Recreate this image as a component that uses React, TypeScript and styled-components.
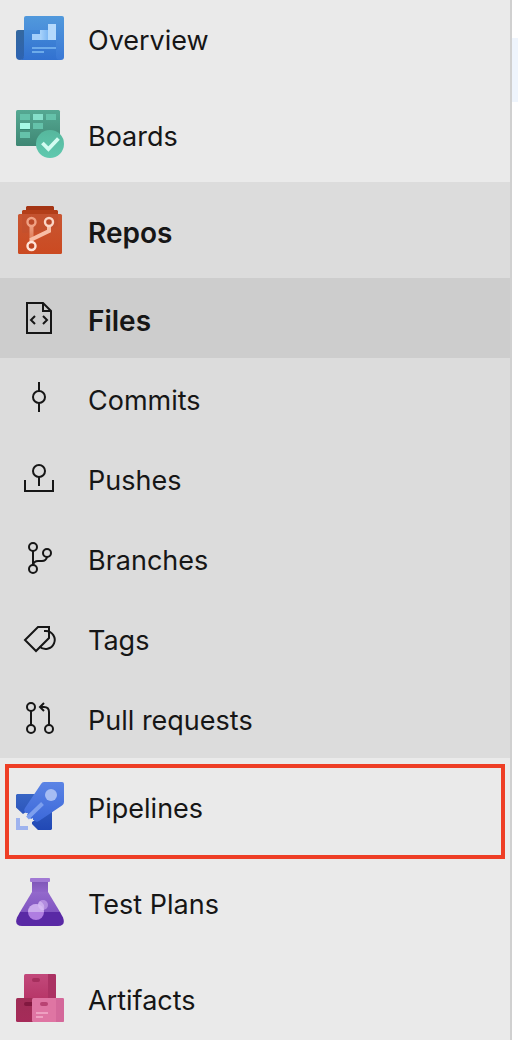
import React from "react";
import styled, { createGlobalStyle, css } from "styled-components";

const GlobalStyle = createGlobalStyle`
  * { box-sizing: border-box; }
  body { margin: 0; background: #ffffff; }
`;

const Page = styled.div`
  display: grid;
  grid-template-columns: minmax(0, 1fr) 6px;
  min-height: 100vh;
  font-family: Inter, "Liberation Sans", sans-serif;
  color: #161616;
`;

const Sidebar = styled.nav`
  background: #eaeaea;
  border-right: 2px solid #d0d0d0;
`;

const Content = styled.main`
  padding-top: 38px;
`;

const SelectedStrip = styled.div`
  height: 64px;
  background: #eff5fd;
`;

const List = styled.ul`
  margin: 0;
  padding: 0;
  list-style: none;
`;

const Group = styled.li<{ $open?: boolean }>`
  position: relative;
  background: ${(p) => (p.$open ? "#dcdcdc" : "transparent")};
`;

const NavLink = styled.a<{ $size?: "hub" | "sub"; $bold?: boolean; $current?: boolean; $edge?: "top" | "bottom" }>`
  display: flex;
  align-items: center;
  gap: 24px;
  padding: ${(p) => (p.$size === "sub" ? "16px" : "24px 16px")};
  ${(p) => p.$edge === "top" && css`padding-top: 14px;`}
  ${(p) => p.$edge === "bottom" && css`padding-bottom: 16px;`}
  background: ${(p) => (p.$current ? "#cdcdcd" : "transparent")};
  color: inherit;
  font-size: ${(p) => (p.$bold ? "28px" : "27px")};
  line-height: 36px;
  font-weight: ${(p) => (p.$bold ? 600 : 400)};
  text-decoration: none;
`;

const Label = styled.span`
  padding-top: 5px;
  white-space: nowrap;
`;

const Icon = styled.svg.attrs({ viewBox: "0 0 48 48", "aria-hidden": true })`
  flex: none;
  width: 48px;
  height: 48px;
`;

const LineIcon = styled(Icon)`
  fill: none;
  stroke: #161616;
  stroke-width: 2;
`;

const Highlight = styled.div`
  position: absolute;
  inset: 6px 5px -5px;
  border: 4px solid #ee3e25;
  pointer-events: none;
`;

function Gradient({ id, from, to }: { id: string; from: string; to: string }) {
  return (
    <linearGradient id={id} x1="0" y1="0" x2="0" y2="1">
      <stop offset="0" stopColor={from} />
      <stop offset="1" stopColor={to} />
    </linearGradient>
  );
}

const OverviewIcon = () => (
  <Icon>
    <defs>
      <Gradient id="ov-main" from="#5199dc" to="#3a78d6" />
      <Gradient id="ov-front" from="#4289d7" to="#3271d0" />
      <Gradient id="ov-side" from="#34689f" to="#2d63b2" />
      <linearGradient id="ov-bars">
        <stop offset="0" stopColor="#a9d3fb" />
        <stop offset="1" stopColor="#7db7f3" />
      </linearGradient>
    </defs>
    <path d="M10 2H46Q48 2 48 4V43Q48 46 45 46H8V4Q8 2 10 2Z" fill="url(#ov-main)" />
    <path d="M8 16H40V42Q40 46 44 46H5L8 42Z" fill="url(#ov-front)" />
    <path d="M2 16H8V42Q8 46 4 46Q0 46 0 42V18Q0 16 2 16Z" fill="url(#ov-side)" />
    <path d="M16 20H24V26H16Z" fill="#a3cffa" />
    <path d="M24 16H32V26H24Z" fill="url(#ov-bars)" />
    <path d="M32 10H40V26H32Z" fill="#b4d9fc" />
    <path d="M16 33H40V35H16ZM16 37H28V39H16Z" fill="#6dabea" />
  </Icon>
);

const BoardsIcon = () => (
  <Icon>
    <defs>
      <Gradient id="bo-main" from="#55a993" to="#3f8774" />
      <Gradient id="bo-badge" from="#56b79d" to="#60c9af" />
    </defs>
    <rect width="44" height="36" rx="1.5" fill="url(#bo-main)" />
    <path d="M4 4H14V10H4ZM30 4H40V10H30ZM17 13H27V19H17ZM4 22H14V28H4Z" fill="#65c2aa" />
    <path d="M17 4H27V10H17Z" fill="#86dfca" />
    <path d="M4 14H14V20H4Z" fill="#348570" />
    <path d="M4 13H14V19H4Z" fill="#a6fae6" />
    <circle cx="34" cy="34" r="14" fill="url(#bo-badge)" />
    <path d="M26.4 33L32.4 39L42.4 28.5" fill="none" stroke="#d3fcf1" strokeWidth="3.8" />
  </Icon>
);

const ReposIcon = () => (
  <Icon>
    <defs>
      <Gradient id="re-main" from="#c85632" to="#cb4a21" />
      <linearGradient id="re-line" gradientUnits="userSpaceOnUse" x1="0" y1="20" x2="0" y2="34">
        <stop offset="0" stopColor="#ee9f82" />
        <stop offset="1" stopColor="#dd7a55" />
      </linearGradient>
    </defs>
    <path d="M11 0H37L38 1V5H10V1Z" fill="#a43514" />
    <path d="M7 4H41L42 5V9H6V5Z" fill="#b33e19" />
    <rect x="2" y="8" width="44" height="40" rx="1.5" fill="url(#re-main)" />
    <path d="M6 8H42V20Q30 27 6 27Z" fill="#c1502f" opacity="0.6" />
    <path d="M15.5 20V33" stroke="url(#re-line)" strokeWidth="4" />
    <path d="M33 20V25L15.5 33.5V37" fill="none" stroke="#f8bea6" strokeWidth="4" />
    <circle cx="15.5" cy="16" r="4" fill="#bb4828" stroke="#f0a184" strokeWidth="2.4" />
    <circle cx="33" cy="16" r="4" fill="#bb4828" stroke="#fbd5c5" strokeWidth="2.4" />
    <circle cx="15.5" cy="40" r="4" fill="#bd4521" stroke="#ffe4d9" strokeWidth="2.4" />
  </Icon>
);

const FilesIcon = () => (
  <LineIcon>
    <path d="M11 9H27L35 17V39H11ZM27 9V17H35" />
    <path d="M19 22L15 26L19 30M27 22L31 26L27 30" />
  </LineIcon>
);

const CommitsIcon = () => (
  <LineIcon>
    <circle cx="23" cy="23" r="6" />
    <path d="M23 8V17M23 29V38" />
  </LineIcon>
);

const PushesIcon = () => (
  <LineIcon>
    <circle cx="23" cy="17" r="6" />
    <path d="M23 23V32M9 26V37H37V26" />
  </LineIcon>
);

const BranchesIcon = () => (
  <LineIcon>
    <circle cx="17" cy="13" r="4" />
    <circle cx="31" cy="19" r="4" />
    <circle cx="17" cy="35" r="4" />
    <path d="M17 17V31M31 23Q30 27 26 27H22Q18 27 17 31" />
  </LineIcon>
);

const TagsIcon = () => (
  <LineIcon>
    <path d="M9 26L22 13H33V24L20 37Z" />
    <path d="M28 17H30A9 9 0 1 1 23.5 32.5" />
  </LineIcon>
);

const PullRequestsIcon = () => (
  <LineIcon>
    <circle cx="15" cy="13" r="4" />
    <circle cx="15" cy="35" r="4" />
    <circle cx="33" cy="35" r="4" />
    <path d="M15 17V31M33 31V18Q33 13 28 13H24.5M28 9L24 13L28 17" />
  </LineIcon>
);

const PipelinesIcon = () => (
  <Icon>
    <defs>
      <Gradient id="pi-back" from="#3865c4" to="#2148b5" />
      <Gradient id="pi-rocket" from="#5b84e5" to="#3c68d9" />
    </defs>
    <path d="M1 12H22L10 30L7 32L0 25.5V13ZM36 28V47L35 48H22L16 42V40L19 38Z" fill="url(#pi-back)" />
    <path d="M28 0H46Q48 0 48 2V20Q48 22 46 23.5L23 39Q20 41 18 38L17 38V36L15 37L11 33L12 31L10 31Q7 29 9 26L25 2Q26 0 28 0Z" fill="url(#pi-rocket)" />
    <path d="M11.5 36L26.5 21.5" stroke="#7d9fee" strokeWidth="4" />
    <circle cx="35" cy="13" r="6" fill="#a6bdf3" />
    <path d="M0 36H4V44H12V48H0Z" fill="#9eb3ee" />
  </Icon>
);

const TestPlansIcon = () => (
  <Icon>
    <defs>
      <Gradient id="te-neck" from="#8057b9" to="#9065ca" />
      <Gradient id="te-glass" from="#9369cc" to="#8055c1" />
    </defs>
    <path d="M16 4H32V14H16Z" fill="url(#te-neck)" />
    <rect x="14" width="20" height="4" rx="1" fill="#a179d4" />
    <path d="M16 14H32L44 34H4Z" fill="url(#te-glass)" />
    <path d="M4 34H44L47 39.5Q50 48 42 48H6Q-2 48 1 39.5Z" fill="#5929a5" />
    <circle cx="20" cy="34" r="8" fill="#af7de1" />
    <path d="M12 34A8 8 0 0 1 28 34Z" fill="#caabed" />
    <circle cx="27" cy="27" r="5" fill="#caa6ed" opacity="0.65" />
    <path d="M22 27A5 5 0 0 1 24 23A8 8 0 0 1 28 32A5 5 0 0 1 22 27Z" fill="#dcc5f6" opacity="0.6" />
  </Icon>
);

const ArtifactsIcon = () => (
  <Icon>
    <defs>
      <Gradient id="ar-top" from="#c2497b" to="#b73668" />
      <Gradient id="ar-left" from="#9f2d56" to="#a62b59" />
    </defs>
    <rect x="8" width="32" height="25" rx="1.5" fill="url(#ar-top)" />
    <path d="M32 0H38.5Q40 0 40 1.5V24H32Z" fill="#ab3263" />
    <rect x="16" y="4" width="8" height="4" rx="2" fill="#a52f5d" />
    <path d="M1.5 24H17V48H1.5Q0 48 0 46.5V25.5Q0 24 1.5 24Z" fill="url(#ar-left)" />
    <path d="M10 28H16V32H10Q8 32 8 30Q8 28 10 28Z" fill="#81183f" />
    <rect x="16" y="24" width="32" height="24" rx="1.5" fill="#df75a3" />
    <path d="M40 24H46.5Q48 24 48 25.5V46.5Q48 48 46.5 48H40Z" fill="#d4689a" />
    <rect x="24" y="28" width="8" height="4" rx="2" fill="#b94373" />
    <path d="M20 38H32V40H20ZM20 42H27V44H20Z" fill="#eea0c1" />
  </Icon>
);

const repoPages = [
  { name: "Files", Glyph: FilesIcon, current: true },
  { name: "Commits", Glyph: CommitsIcon },
  { name: "Pushes", Glyph: PushesIcon },
  { name: "Branches", Glyph: BranchesIcon },
  { name: "Tags", Glyph: TagsIcon },
  { name: "Pull requests", Glyph: PullRequestsIcon },
];

export default function App() {
  return (
    <Page>
      <GlobalStyle />
      <Sidebar aria-label="Project">
        <List>
          <Group>
            <NavLink href="#overview" $edge="top">
              <OverviewIcon />
              <Label>Overview</Label>
            </NavLink>
          </Group>
          <Group>
            <NavLink href="#boards">
              <BoardsIcon />
              <Label>Boards</Label>
            </NavLink>
          </Group>
          <Group $open>
            <NavLink href="#repos" $bold>
              <ReposIcon />
              <Label>Repos</Label>
            </NavLink>
            <List>
              {repoPages.map(({ name, Glyph, current }) => (
                <li key={name}>
                  <NavLink
                    href={`#${name.toLowerCase().replace(" ", "-")}`}
                    $size="sub"
                    $bold={current}
                    $current={current}
                    aria-current={current ? "page" : undefined}
                  >
                    <Glyph />
                    <Label>{name}</Label>
                  </NavLink>
                </li>
              ))}
            </List>
          </Group>
          <Group>
            <NavLink href="#pipelines">
              <PipelinesIcon />
              <Label>Pipelines</Label>
            </NavLink>
            <Highlight />
          </Group>
          <Group>
            <NavLink href="#test-plans">
              <TestPlansIcon />
              <Label>Test Plans</Label>
            </NavLink>
          </Group>
          <Group>
            <NavLink href="#artifacts" $edge="bottom">
              <ArtifactsIcon />
              <Label>Artifacts</Label>
            </NavLink>
          </Group>
        </List>
      </Sidebar>
      <Content>
        <SelectedStrip />
      </Content>
    </Page>
  );
}
